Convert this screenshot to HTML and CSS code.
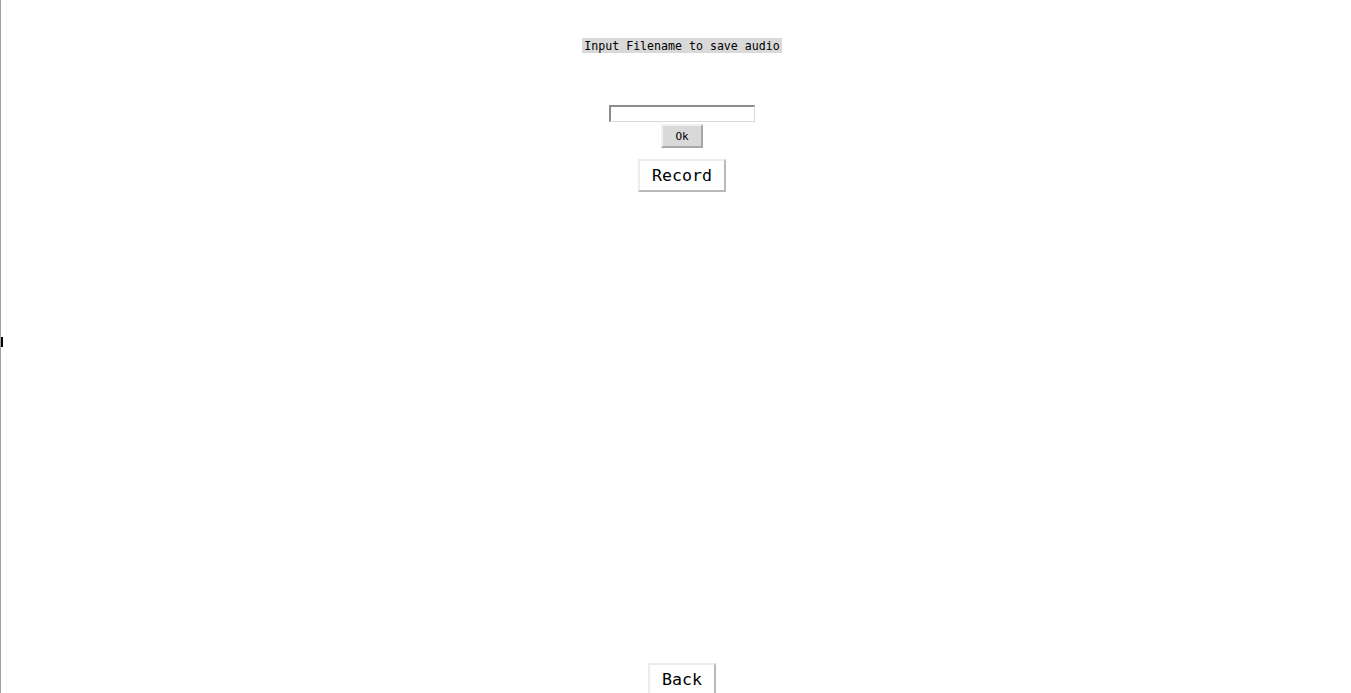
FILE: index.html
```html
<!DOCTYPE html>
<html>
<head>
<meta charset="utf-8">
<link rel="stylesheet" href="styles.css">
</head>
<body>
<div class="screen">
  <div class="column">
    <div class="label">Input Filename to save audio</div>
    <input class="filename" type="text">
    <button class="ok">Ok</button>
    <button class="big record">Record</button>
    <div class="spacer"></div>
    <button class="big back">Back</button>
  </div>
  <div class="caret"></div>
</div>
</body>
</html>
```
FILE: styles.css
```css
html, body {
  margin: 0;
  padding: 0;
  background: #fff;
  overflow: hidden;
}
.screen {
  position: relative;
  width: 1351px;
  height: 693px;
  box-sizing: border-box;
  border-left: 1px solid #a0a0a0;
  overflow: hidden;
}
.column {
  display: flex;
  flex-direction: column;
  align-items: center;
  padding-top: 38px;
  padding-left: 12px;
  height: 100%;
  box-sizing: border-box;
}
.label {
  background: #d9d9d9;
  font-family: "DejaVu Sans Mono", "Liberation Mono", monospace;
  font-size: 11.6px;
  line-height: 16px;
  height: 15px;
  padding: 0 2px;
  color: #000;
  white-space: pre;
}
.filename {
  margin-top: 52px;
  width: 146px;
  height: 17px;
  box-sizing: border-box;
  border: 2px solid;
  border-color: #8c8c8c #d9d9d9 #d9d9d9 #8c8c8c;
  border-width: 2px 1px 1px 2px;
  background: #fff;
  padding: 0;
  outline: none;
}
.ok {
  margin-top: 2px;
  width: 42px;
  height: 24px;
  box-sizing: border-box;
  background: #d9d9d9;
  border: 2px solid;
  border-color: #f0f0f0 #a8a8a8 #a8a8a8 #f0f0f0;
  font-family: "DejaVu Sans Mono", "Liberation Mono", monospace;
  font-size: 11px;
  color: #000;
  padding: 0;
}
.big {
  background: #fff;
  border: 2px solid;
  border-color: #ececec #b8b8b8 #b8b8b8 #ececec;
  font-family: "DejaVu Sans Mono", "Liberation Mono", monospace;
  font-size: 16.6px;
  color: #000;
  padding: 0;
  box-sizing: border-box;
}
.record {
  margin-top: 11px;
  width: 88px;
  height: 33px;
}
.spacer {
  flex: 1;
}
.back {
  width: 68px;
  height: 33px;
  margin-bottom: -3px;
}
.caret {
  position: absolute;
  left: 0;
  top: 337px;
  width: 2px;
  height: 10px;
  background: #000;
}
```
